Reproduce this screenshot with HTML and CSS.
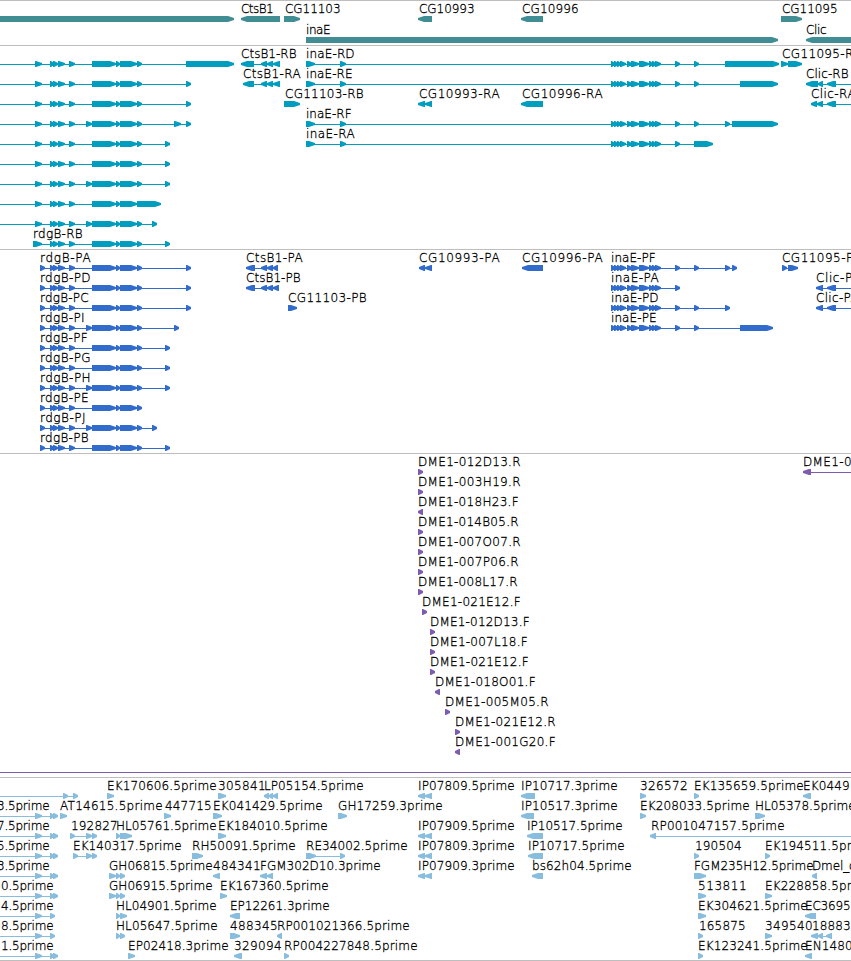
FILE: index.html
```
<!DOCTYPE html>
<html lang="en">
<head>
<meta charset="utf-8">
<title>Genome tracks</title>
<link rel="stylesheet" href="styles.css">
</head>
<body>
<main class="browser">
  <section class="track track-gene" data-track="gene"></section>
  <section class="track track-rna" data-track="rna"></section>
  <section class="track track-cds" data-track="cds"></section>
  <section class="track track-bac" data-track="bac"></section>
  <section class="track track-est" data-track="est"></section>
</main>
<script src="tracks.js"></script>
</body>
</html>
```
FILE: styles.css
```
body {
  margin: 0;
  background: #fff;
  overflow: hidden;
}

.browser {
  display: flex;
  flex-direction: column;
  height: 960px;
  border-bottom: 1px solid #bebebe;
}

.track {
  box-sizing: border-box;
  flex: none;
  border-top: 1px solid #bebebe;
  overflow: hidden;
}

.track-gene { height: 45px; color: #408e94; }
.track-rna { height: 204px; color: #009dbf; }
.track-cds { height: 204px; color: #316ccc; }
.track-bac { height: 324px; color: #7b5cae; }
.track-est { height: 183px; color: #88bddd; }

.features {
  display: block;
  width: 100%;
  height: 100%;
}

.features path,
.features rect {
  fill: currentColor;
}

.label {
  fill: #000;
  stroke: #000;
  stroke-width: 0.3px;
  font-family: "DejaVu Sans Light", "DejaVu Sans", sans-serif;
  font-size: 12px;
  font-weight: 200;
}
```
FILE: tracks.js
```
// Each feature: "label;left;right;strand;exons;from-to of the connector (optional)"
// Rows are keyed by the vertical centre of their glyphs inside the track.
const NS = 'http://www.w3.org/2000/svg';
const HEAD = 6;

const ALT = ' 86-92';
const EX = '50-54 53-58 58-65 69-75';
const EX2 = ' 92-116 116-120 120-137';
const rdg = (first, alt, tail) => first + ' ' + EX + (alt ? ALT : '') + EX2 + ' ' + tail;
const INA = '611-615 614-618 617-621 620-626 627-632 631-639 639-649 649-653 652-656 655-661 675-680';
const rna = (alt, tail) => ';;;+;' + rdg('35-42', alt, tail) + ';-5';
const cds = (name, alt, tail, right) => 'rdgB-' + name + ';40;' + right + ';+;' + rdg('40-45', alt, tail);
const LEFT = '35-42 50-54 53-58;-5';
const IP = ';418;514;-;418-425 425-432';

const tracks = {
  gene: { first: 18, pitch: 21, rows: [
    [';;;+;-10-234', 'CtsB1;241;273;-;241-280', 'CG11103;285;340;+;284-300', 'CG10993;419;474;-;418-432', 'CG10996;522;578;-;521-543', 'CG11095;782;837;+;781-802'],
    ['inaE;306;330;+;306-778', 'Clic;806;826;-;806-870']
  ]},
  rna: { first: 18, pitch: 20, rows: [
    [rna(0, '137-142 186-234'), 'CtsB1-RB;241;296;-;241-254 261-267 267-273 273-280', 'inaE-RD;306;354;+;306-315 340-346 ' + INA + ' 694-699 725-779', 'CG11095-RB;782;861;+;781-788 788-802'],
    [rna(0, '137-142 186-191'), 'CtsB1-RA;243;300;-;243-254 261-267 267-273 273-280', 'inaE-RE;306;352;+;306-315 340-346 ' + INA + ' 694-699 740-778', 'Clic-RB;806;848;-;806-818 818-823 827-836;;870'],
    [rna(0, '137-142 186-191'), 'CG11103-RB;285;363;+;284-300', 'CG10993-RA;419;499;-;418-425 425-432', 'CG10996-RA;522;602;-;521-543', 'Clic-RA;811;855;-;811-817 817-823 827-836;;870'],
    [rna(1, '137-142 174-181 186-191'), 'inaE-RF;306;351;+;306-315 340-346 ' + INA + ' 694-699 725-730 732-778'],
    [rna(0, '137-142 165-170'), 'inaE-RA;306;354;+;306-315 340-346 ' + INA + ' 694-713'],
    [rna(0, '137-142 165-170')],
    [rna(1, '137-142 165-170')],
    [rna(0, '137-161')],
    [rna(1, '137-142 152-157')],
    ['rdgB-RB;33;82;+;' + rdg('33-42', 0, '137-142 165-170')]
  ]},
  cds: { first: 18, pitch: 20, rows: [
    [cds('PA', 0, '137-142 186-191', 90), 'CtsB1-PA;246;302;-;246-255 261-267 267-273 273-278', 'CG10993-PA;419;499;-;419-425 425-432', 'CG10996-PA;522;602;-;522-543', 'inaE-PF;611;655;+;' + INA + ' 694-699 725-730 732-737', 'CG11095-PB;782;861;+;782-787 788-798'],
    [cds('PD', 0, '137-142 186-191', 90), 'CtsB1-PB;246;300;-;246-255 261-267 267-273 273-279', 'inaE-PA;611;658;+;' + INA, 'Clic-PB;816;860;-;816-823 827-836;;870'],
    [cds('PC', 0, '137-142 186-191', 88), 'CG11103-PB;288;366;+;288-297', 'inaE-PD;611;658;+;' + INA + ' 694-699 725-730', 'Clic-PA;816;858;-;816-823 827-836;;870'],
    [cds('PI', 1, '137-142 174-179', 84), 'inaE-PE;611;656;+;' + INA + ' 694-699 740-773'],
    [cds('PF', 0, '137-142 165-170', 87)],
    [cds('PG', 0, '137-142 165-170', 90)],
    [cds('PH', 1, '137-142 165-170', 90)],
    [cds('PE', 0, '137-142', 88)],
    [cds('PJ', 1, '137-142 152-157', 85)],
    [cds('PB', 0, '137-142 165-170', 88)]
  ]},
  bac: { first: 18, pitch: 20, baseline: 318, rows: [
    ['DME1-012D13.R;418;520;+;418-423', 'DME1-0;803;851;-;803-811;;870'],
    ['DME1-003H19.R;418;520;+;418-423'],
    ['DME1-018H23.F;418;518;-;418-423'],
    ['DME1-014B05.R;418;518;+;418-423'],
    ['DME1-007O07.R;418;520;+;418-423'],
    ['DME1-007P06.R;418;518;+;418-423'],
    ['DME1-008L17.R;418;517;+;418-423'],
    ['DME1-021E12.F;422;520;+;422-427'],
    ['DME1-012D13.F;430;529;+;430-435'],
    ['DME1-007L18.F;430;527;+;430-435'],
    ['DME1-021E12.F;430;528;+;430-435'],
    ['DME1-018O01.F;435;535;-;435-440'],
    ['DME1-005M05.R;445;548;+;445-450'],
    ['DME1-021E12.R;455;555;+;455-460'],
    ['DME1-001G20.F;455;555;-;455-460']
  ]},
  est: { first: 18, pitch: 20, rows: [
    [';;;+;63-68 73-78;-5', 'EK170606.5prime;107;216;+;107-114', '305841;218;265;+;218-226', 'LP05154.5prime;264;363;-;264-269 269-273 273-278', 'IP07809.5prime' + IP, 'IP10717.3prime;521;617;-;521-535', '326572;640;687;+;640-646', 'EK135659.5prime;694;803;+;694-699', 'EK0449;803;849;-;803-811'],
    ['3.5prime;-3;49;+;' + LEFT, 'AT14615.5prime;60;162;+;60-67', '447715;165;211;+;164-171', 'EK041429.5prime;213;322;+;213-222', 'GH17259.3prime;338;442;+;338-347', 'IP10517.3prime;521;617;-;521-534', 'EK208033.5prime;640;749;+;640-646', 'HL05378.5prime;755;855;+;755-765'],
    ['7.5prime;-3;49;+;' + LEFT, '192827;71;117;+;70-75 86-92 92-97', 'HL05761.5prime;116;216;+;116-120 120-132', 'EK184010.5prime;218;327;+;218-226', 'IP07909.5prime' + IP, 'IP10517.5prime;527;622;-;527-543', 'RP001047157.5prime;651;784;-;650-656;;870'],
    ['5.5prime;-3;49;+;' + LEFT, 'EK140317.5prime;73;181;+;73-78 86-92 92-97', 'RH50091.5prime;192;295;+;192-203', 'RE34002.5prime;306;407;+;306-316 340-345', 'IP07809.3prime' + IP, 'IP10717.5prime;528;624;-;528-543', '190504;695;741;+;694-699', 'EK194511.5prime;765;874;+;765-770'],
    ['3.5prime;-3;49;+;' + LEFT, 'GH06815.5prime;109;212;+;109-116 116-120 120-125', '484341;213;260;-;213-220', 'FGM302D10.3prime;260;380;-;260-267 267-273', 'IP07909.3prime' + IP, 'bs62h04.5prime;532;631;-;532-543', 'FGM235H12.5prime;694;813;+;694-706', 'Dmel_c;812;855;-;812-817'],
    ['0.5prime;1;53;+;' + LEFT, 'GH06915.5prime;109;212;+;109-116 116-120 120-125', 'EK167360.5prime;220;328;+;220-227', '513811;698;746;+;698-706', 'EK228858.5prime;765;874;+;765-772'],
    ['4.5prime;1;53;+;35-42 50-55;-5', 'HL04901.5prime;116;216;+;116-120 120-127', 'EP12261.3prime;230;329;-;230-240', 'EK304621.5prime;698;807;+;698-706', 'EC3695;805;850;-;805-816'],
    ['8.5prime;1;53;+;35-42 50-55;-5', 'HL05647.5prime;116;217;+;116-120 120-125', '488345;230;277;+;230-240', 'RP001021366.5prime;277;409;-;277-282', '165875;699;745;+;698-703', '349540;765;812;+;765-772', '18883;812;850;-;811-818 818-823 826-832'],
    ['1.5prime;1;53;+;' + LEFT, 'EP02418.3prime;128;228;+;128-135', '329094;234;281;-;234-242', 'RP004227848.5prime;284;417;+;284-289', 'EK123241.5prime;698;807;+;698-703', 'EN1480;805;852;-;805-812']
  ]}
};

function add(svg, tag, attrs, text) {
  const el = document.createElementNS(NS, tag);
  for (const key in attrs) el.setAttribute(key, attrs[key]);
  if (text) el.textContent = text;
  svg.appendChild(el);
}

function exonPath(a, b, y, strand) {
  const head = Math.min(HEAD, b - a - 1);
  const tip = strand === '+' ? b : a;
  const tail = strand === '+' ? a : b;
  const neck = strand === '+' ? b - head : a + head;
  return `M${tail} ${y - 3}H${neck}L${tip} ${y - 1}V${y + 1}L${neck} ${y + 3}H${tail}Z`;
}

function drawFeature(svg, spec, y) {
  const [label, left, right, strand, exonText, from, to] = spec.split(';');
  const exons = exonText.split(' ').map(e => e.match(/^(-?\d+)-(\d+)$/).slice(1).map(Number));
  const start = from ? +from : exons[0][0];
  const end = to ? +to : exons[exons.length - 1][1];
  if (exons.length > 1 || from || to) {
    add(svg, 'rect', { x: start, y, width: end - start - (to ? 0 : 2), height: 1 });
  }
  add(svg, 'path', { d: exons.map(e => exonPath(e[0], e[1], y, strand)).join('') });
  if (label) {
    add(svg, 'text', { class: 'label', x: +left, y: y - 6, textLength: right - left + 0.6 }, label);
  }
}

for (const section of document.querySelectorAll('.track')) {
  const track = tracks[section.dataset.track];
  const svg = document.createElementNS(NS, 'svg');
  svg.setAttribute('class', 'features');
  section.appendChild(svg);
  track.rows.forEach((row, i) => {
    for (const spec of row) drawFeature(svg, spec, track.first + i * track.pitch);
  });
  if (track.baseline) add(svg, 'rect', { x: 0, y: track.baseline, width: 851, height: 1 });
}
```
